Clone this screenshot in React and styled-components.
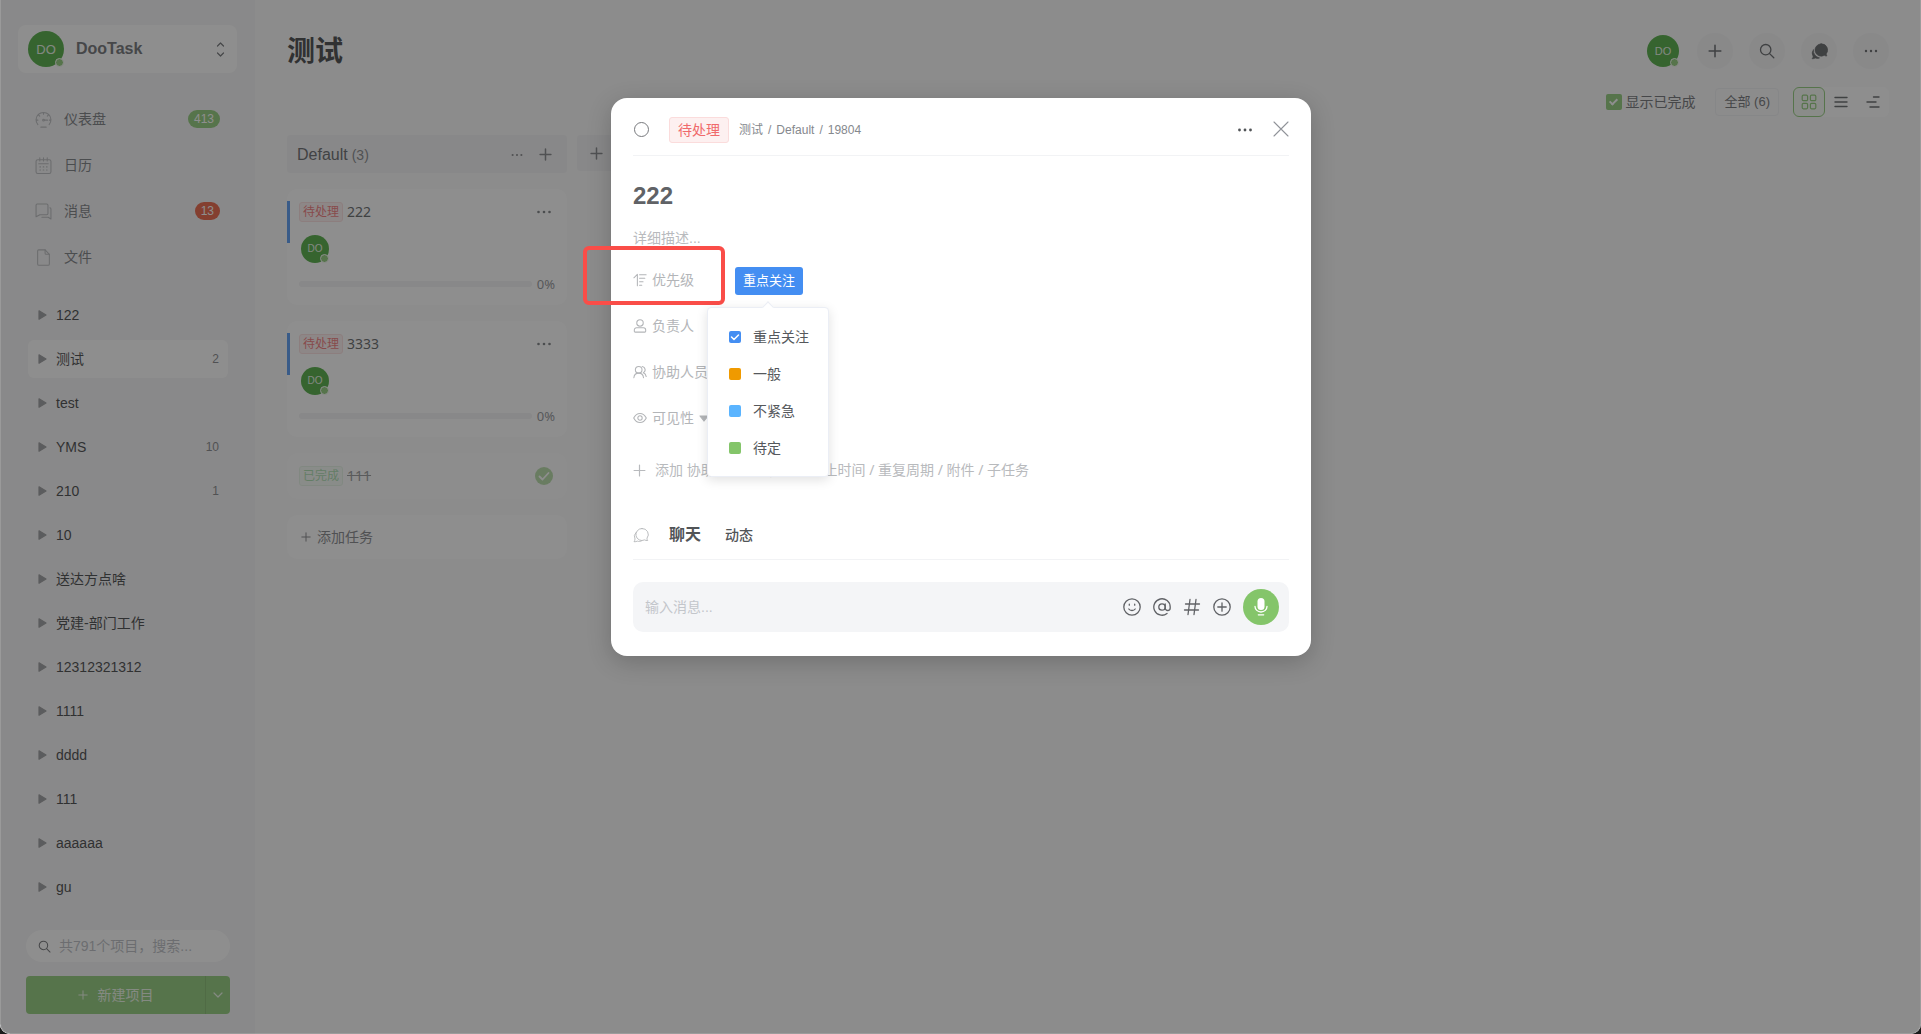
import React, { useState } from "react";
import styled, { createGlobalStyle, css } from "styled-components";

const sans = `"Liberation Sans", "Noto Sans CJK SC", sans-serif`;
const humanist = `"Noto Sans", "Noto Sans CJK SC", sans-serif`;

const Global = createGlobalStyle`
  *, *::before, *::after { box-sizing: border-box; }
  body { margin: 0; background: #1b1b1b; font-family: ${sans}; font-size: 14px; line-height: 20px; color: #303133; }
  button, input { font: inherit; color: inherit; margin: 0; padding: 0; border: 0; background: none; outline: none; }
  button { cursor: pointer; }
  h1, h2, h3, p, ul { margin: 0; padding: 0; font-size: inherit; font-weight: inherit; }
  ul { list-style: none; }
  a { color: inherit; text-decoration: none; }
`;

/* ---------- shared ---------- */

const Glyph = styled.svg.attrs((p) => ({
  width: p.$size || 16,
  height: p.$size || 16,
  viewBox: p.viewBox || "0 0 16 16",
  fill: "none",
  stroke: "currentColor",
  strokeWidth: p.$w || 1.2,
  strokeLinecap: "round",
  strokeLinejoin: "round",
  "aria-hidden": true,
}))`
  display: block;
  flex: none;
`;

const Plus = ({ size = 12, w = 1.2 }) => (
  <Glyph $size={size} viewBox="0 0 12 12" $w={w}>
    <path d="M6 1v10M1 6h10" />
  </Glyph>
);
const Dots = ({ size = 16, r = 1.2, gap = 5 }) => (
  <Glyph $size={size} $w={0}>
    <g fill="currentColor" stroke="none">
      <circle cx={8 - gap} cy="8" r={r} />
      <circle cx="8" cy="8" r={r} />
      <circle cx={8 + gap} cy="8" r={r} />
    </g>
  </Glyph>
);
const SearchIcon = ({ size }) => (
  <Glyph $size={size} $w={1.3}>
    <circle cx="6.7" cy="6.7" r="5.2" />
    <path d="M10.6 10.6l4.2 4.2" />
  </Glyph>
);

const Face = styled.span`
  position: relative;
  display: inline-flex;
  flex: none;
  align-items: center;
  justify-content: center;
  width: ${(p) => p.$size}px;
  height: ${(p) => p.$size}px;
  border-radius: 50%;
  background: #3ca32d;
  color: #e6f2e4;
  font-size: ${(p) => p.$font}px;
  font-weight: 400;
  line-height: 1;
  &::after {
    content: "";
    position: absolute;
    right: 0;
    bottom: 0;
    width: 9px;
    height: 9px;
    border: 1px solid #fff;
    border-radius: 50%;
    background: #84c56a;
  }
`;
const Avatar = ({ size, font }) => (
  <Face $size={size} $font={font}>
    DO
  </Face>
);

const tones = {
  todo: css`
    color: #f0696b;
    background: #fdf0f0;
    border-color: #fbdcdc;
  `,
  done: css`
    color: #6fc777;
    background: #f1f9f1;
    border-color: #d5eed6;
  `,
};
const Tag = styled.span`
  display: inline-flex;
  align-items: center;
  justify-content: center;
  flex: none;
  height: ${(p) => (p.$large ? 26 : 20)}px;
  padding: 0 ${(p) => (p.$large ? 8 : 3)}px;
  border: 1px solid;
  border-radius: 3px;
  font-size: ${(p) => (p.$large ? 14 : 12)}px;
  ${(p) => tones[p.$tone]}
`;

/* ---------- shell ---------- */

const Window = styled.div`
  position: relative;
  display: flex;
  height: 100vh;
  overflow: hidden;
  border-radius: 0 0 10px 10px;
  background: #fafafa;
`;
const Mask = styled.div`
  position: absolute;
  inset: 0;
  display: flex;
  align-items: flex-start;
  justify-content: center;
  padding: 98px 0 0 1px;
  background: rgba(50, 50, 50, 0.55);
  border: 1px solid rgba(255, 255, 255, 0.14);
  border-top: 0;
  border-radius: 0 0 10px 10px;
`;

/* ---------- sidebar ---------- */

const Sidebar = styled.aside`
  display: flex;
  flex-direction: column;
  flex: none;
  width: 255px;
  padding: 25px 0 20px;
  background: #f4f4f5;
`;
const Account = styled.button`
  display: flex;
  align-items: center;
  height: 48px;
  margin: 0 18px;
  padding: 0 8px 0 10px;
  gap: 12px;
  border-radius: 8px;
  background: #fff;
  color: #606266;
  font-size: 16px;
  font-weight: 700;
  text-align: left;
  span:nth-child(2) { flex: 1; }
`;
const Menu = styled.ul`
  margin-top: 23px;
`;
const MenuLink = styled.a`
  display: flex;
  align-items: center;
  height: 46px;
  padding: 0 35px;
  gap: 12px;
  color: #6c6f74;
  svg { color: #b2b4b8; }
  span { flex: 1; }
`;
const Badge = styled.b`
  min-width: 24px;
  height: 18px;
  padding: 0 6px;
  border-radius: 9px;
  background: ${(p) => p.$color};
  color: #fff;
  font-size: 12px;
  font-weight: 400;
  line-height: 18px;
  text-align: center;
`;
const Projects = styled.ul`
  flex: 1;
  min-height: 0;
  margin-top: 16px;
  padding: 0 27px 0 28px;
  overflow: hidden;
`;
const Project = styled.a`
  display: flex;
  align-items: center;
  height: 38px;
  margin-bottom: 6px;
  padding: 0 9px;
  gap: 9px;
  border-radius: 6px;
  background: ${(p) => (p.$active ? "#fff" : "transparent")};
  svg { color: #8f9194; }
  span { flex: 1; }
  small { font-size: 12px; color: #77797d; }
`;
const SideFoot = styled.div`
  display: flex;
  flex-direction: column;
  gap: 14px;
  padding: 0 25px 0 26px;
`;
const SearchBox = styled.label`
  display: flex;
  align-items: center;
  height: 32px;
  padding: 0 12px;
  gap: 8px;
  border-radius: 16px;
  background: #fff;
  color: #606266;
  input { flex: 1; min-width: 0; }
  input::placeholder { color: #b4b7bd; opacity: 1; }
`;
const SplitButton = styled.div`
  display: flex;
  height: 38px;
  border-radius: 4px;
  background: #84c56a;
  color: #e9f5e4;
  overflow: hidden;
`;
const CreateButton = styled.button`
  display: flex;
  flex: 1;
  align-items: center;
  justify-content: center;
  gap: 10px;
`;
const MoreButton = styled.button`
  display: flex;
  align-items: center;
  justify-content: center;
  width: 25px;
  border-left: 1px solid #75b15d;
`;

/* ---------- board ---------- */

const Main = styled.main`
  flex: 1;
  min-width: 0;
  padding: 33px 32px 0;
`;
const TopBar = styled.header`
  display: flex;
  align-items: center;
  justify-content: space-between;
  height: 36px;
`;
const PageTitle = styled.h1`
  padding-top: 2px;
  color: #303133;
  font-size: 28px;
  font-weight: 700;
  line-height: 36px;
`;
const Actions = styled.div`
  display: flex;
  align-items: center;
  gap: 16px;
  > span { margin-right: 2px; }
`;
const RoundButton = styled.button`
  display: flex;
  align-items: center;
  justify-content: center;
  width: 36px;
  height: 36px;
  border-radius: 50%;
  background: #f3f3f4;
  color: #515457;
`;
const Filters = styled.div`
  display: flex;
  align-items: center;
  justify-content: flex-end;
  height: 30px;
  margin-top: 18px;
`;
const CheckLabel = styled.label`
  display: flex;
  align-items: center;
  gap: 3px;
  margin-right: 20px;
  color: #606266;
  input {
    position: relative;
    appearance: none;
    width: 16px;
    height: 16px;
    border-radius: 2px;
    background: #84c56a;
  }
  input:checked::after {
    content: "";
    position: absolute;
    left: 5px;
    top: 3px;
    width: 5px;
    height: 8px;
    border: solid #fff;
    border-width: 0 2px 2px 0;
    transform: rotate(45deg);
  }
`;
const FilterButton = styled.button`
  height: 28px;
  padding: 0 8px;
  border: 1px solid #eeeff1;
  border-radius: 4px;
  margin-right: 14px;
  color: #606266;
  font-size: 13px;
`;
const ViewSwitch = styled.div`
  display: flex;
  border-radius: 6px;
  background: #fff;
`;
const ViewButton = styled.button`
  display: flex;
  align-items: center;
  justify-content: center;
  width: 32px;
  height: 30px;
  border: 1px solid ${(p) => (p.$active ? "#84c56a" : "transparent")};
  border-radius: 6px;
  background: ${(p) => (p.$active ? "#f6faf4" : "transparent")};
  color: ${(p) => (p.$active ? "#84c56a" : "#515457")};
`;
const Board = styled.div`
  display: flex;
  align-items: flex-start;
  gap: 10px;
  margin-top: 18px;
`;
const Column = styled.section`
  display: flex;
  flex-direction: column;
  flex: none;
  width: 280px;
  gap: 16px;
`;
const ColumnHead = styled.header`
  display: flex;
  align-items: center;
  height: 38px;
  padding: 1px 15px 0 10px;
  border-radius: 4px;
  background: #f2f2f3;
  color: #77797d;
  h2 { margin-right: 4px; color: #55585c; font-size: 16px; }
  span { flex: 1; font-size: 14px; }
  button + button { margin-left: 15px; }
`;
const AddColumn = styled.button`
  display: flex;
  align-items: center;
  flex: none;
  width: 280px;
  height: 36px;
  padding-left: 13px;
  border-radius: 4px;
  background: #f2f2f3;
  color: #77797d;
`;
const Card = styled.article`
  padding: 12px 12px 0 0;
  height: ${(p) => (p.$done ? 46 : 116)}px;
  border-radius: 10px;
  background: ${(p) => (p.$done ? "#fcfcfc" : "#fff")};
`;
const CardBody = styled.div`
  padding-left: ${(p) => (p.$done ? 12 : 9)}px;
  border-left: ${(p) => (p.$done ? "0" : "3px solid #448ef2")};
  height: ${(p) => (p.$done ? 24 : 42)}px;
`;
const CardTitle = styled.div`
  display: flex;
  align-items: center;
  height: 22px;
  gap: 4px;
  font-family: ${humanist};
  font-size: 14px;
  opacity: ${(p) => (p.$done ? 0.65 : 1)};
  h3 { flex: 1; color: #515457; text-decoration: ${(p) => (p.$done ? "line-through" : "none")}; }
  button { margin-right: ${(p) => (p.$done ? 2 : 3)}px; color: #6c6f74; }
`;
const Owner = styled.div`
  padding: 12px 2px 0;
`;
const Progress = styled.div`
  display: flex;
  align-items: center;
  gap: 5px;
  height: 16px;
  margin: 33px 0 0 12px;
  color: #85888d;
  font-family: ${humanist};
  font-size: 13px;
  i { flex: 1; height: 6px; border-radius: 3px; background: #f1f1f3; }
`;
const AddTask = styled.button`
  display: flex;
  align-items: center;
  height: 44px;
  padding: 0 14px;
  gap: 6px;
  border-radius: 10px;
  background: #fefefe;
  color: #77797d;
`;

/* ---------- task dialog ---------- */

const Dialog = styled.section`
  position: relative;
  width: 700px;
  max-width: calc(100% - 48px);
  padding: 0 22px 24px;
  border-radius: 16px;
  background: #fff;
  box-shadow: 0 6px 24px rgba(0, 0, 0, 0.2);
`;
const DialogHead = styled.header`
  display: flex;
  align-items: center;
  height: 58px;
  padding-top: 6px;
  border-bottom: 1px solid #f2f3f5;
`;
const StateButton = styled.button`
  width: 15px;
  height: 15px;
  margin: 0 20px 0 1px;
  border: 1px solid #77797d;
  border-radius: 50%;
`;
const Crumbs = styled.nav`
  display: flex;
  flex: 1;
  gap: 5px;
  margin-left: 10px;
  color: #85888d;
  font-size: 12px;
`;
const HeadButton = styled.button`
  margin-left: ${(p) => (p.$gap ? 20 : 0)}px;
  padding-bottom: ${(p) => (p.$gap ? 2 : 0)}px;
  color: ${(p) => (p.$gap ? "#909399" : "#515457")};
`;
const TaskTitle = styled.h2`
  margin-top: 25px;
  color: #606266;
  font-size: 24px;
  font-weight: 700;
  line-height: 30px;
`;
const Description = styled.p`
  margin-top: 17px;
  color: #b8babd;
`;
const Fields = styled.div`
  margin-top: 10px;
`;
const Field = styled.div`
  display: flex;
  align-items: center;
  height: 46px;
  color: #b3b5b8;
`;
const FieldName = styled.span`
  display: flex;
  align-items: center;
  gap: 5px;
  width: 102px;
  padding-bottom: 2px;
  white-space: nowrap;
`;
const PriorityWrap = styled.div`
  position: relative;
`;
const Priority = styled.button`
  display: block;
  height: 28px;
  padding: 0 8px;
  border-radius: 3px;
  background: #448ef2;
  color: #fff;
  font-size: 13px;
`;
const Popup = styled.div`
  position: absolute;
  z-index: 2;
  top: 40px;
  left: -28px;
  width: 122px;
  padding: 10px 0;
  border: 1px solid #ebeef5;
  border-radius: 4px;
  background: #fff;
  box-shadow: 0 3px 12px rgba(0, 0, 0, 0.12);
  &::before {
    content: "";
    position: absolute;
    top: -5px;
    left: 56px;
    width: 8px;
    height: 8px;
    border: solid #ebeef5;
    border-width: 1px 0 0 1px;
    background: #fff;
    transform: rotate(45deg);
  }
`;
const Option = styled.button`
  display: flex;
  align-items: center;
  width: 100%;
  height: 37px;
  padding-left: 21px;
  gap: 12px;
  color: #55585c;
  white-space: nowrap;
  i {
    display: flex;
    align-items: center;
    justify-content: center;
    width: 12px;
    height: 12px;
    border-radius: 2px;
    background: ${(p) => p.$color};
    color: #fff;
  }
`;
const AddField = styled.button`
  display: flex;
  align-items: center;
  height: 30px;
  gap: 9px;
  margin-top: 13px;
  color: #b8babd;
  font-family: ${humanist};
`;
const Tabs = styled.div`
  display: flex;
  align-items: center;
  height: 50px;
  margin-top: 25px;
  border-bottom: 1px solid #f2f3f5;
  svg { margin-right: 20px; color: #b3b5b8; }
`;
const Tab = styled.button`
  margin-right: 24px;
  color: #515457;
  font-size: ${(p) => (p.$active ? 16 : 14)}px;
  font-weight: ${(p) => (p.$active ? 700 : 500)};
`;
const Composer = styled.div`
  display: flex;
  align-items: center;
  height: 50px;
  margin-top: 22px;
  padding: 0 10px 0 12px;
  gap: 12px;
  border-radius: 10px;
  background: #f4f5f7;
  color: #606266;
  input { flex: 1; min-width: 0; }
  input::placeholder { color: #c3c6cb; opacity: 1; }
`;
const MicButton = styled.button`
  display: flex;
  align-items: center;
  justify-content: center;
  width: 36px;
  height: 36px;
  border-radius: 50%;
  background: #84c56a;
  color: #fff;
`;
const Marker = styled.div`
  position: absolute;
  top: 148px;
  left: -28px;
  width: 142px;
  height: 59px;
  border: 4px solid #fa4d48;
  border-radius: 6px;
  pointer-events: none;
`;

/* ---------- data ---------- */

const menu = [
  {
    name: "仪表盘",
    badge: 413,
    color: "#84c56a",
    icon: (
      <>
        <path d="M2.700 12.900A7 7 0 1 1 13.300 12.900M5.500 15.200h5M8.800 8.600h3M8 1.500v1.600M1.200 8.600h1.500M14.700 8.600h-1.200M3.300 3.700l1.100 1.100M12.700 3.700l-1.100 1.100" />
        <circle cx="8" cy="8.6" r=".8" />
      </>
    ),
  },
  {
    name: "日历",
    icon: (
      <>
        <rect x="1" y="2.5" width="14" height="13" rx="1.6" />
        <path d="M4.5.8v3M8 .8v3M11.5.8v3M3.5 6.3h9M4.6 9.3h.6M7.7 9.3h.6M10.8 9.3h.6M4.6 12.3h.6M7.7 12.3h.6M10.8 12.3h.6" />
      </>
    ),
  },
  {
    name: "消息",
    badge: 13,
    color: "#e8502f",
    icon: (
      <>
        <path d="M2 1h9a1.2 1.2 0 0 1 1.200 1.200v7.600a1.200 1.200 0 0 1-1.200 1.200H4.600L1 13V2a1 1 0 0 1 1-1z" />
        <path d="M14 4.500a1.200 1.200 0 0 1 1 1.200V15l-2.600-1.600H6.500" />
      </>
    ),
  },
  {
    name: "文件",
    icon: (
      <>
        <path d="M3.500.8h6L13.500 5v9a1.300 1.300 0 0 1-1.300 1.300H3.800A1.300 1.300 0 0 1 2.500 14V2A1.200 1.200 0 0 1 3.500.8z" />
        <path d="M9.500.8V4a1 1 0 0 0 1 1h3" />
      </>
    ),
  },
];

const projects = [
  ["122"],
  ["测试", 2, true],
  ["test"],
  ["YMS", 10],
  ["210", 1],
  ["10"],
  ["送达方点啥"],
  ["党建-部门工作"],
  ["12312321312"],
  ["1111"],
  ["dddd"],
  ["111"],
  ["aaaaaa"],
  ["gu"],
];

const priorities = [
  ["重点关注", "#448ef2"],
  ["一般", "#f09a00"],
  ["不紧急", "#5ab4ff"],
  ["待定", "#84c56a"],
];

const Task = ({ title }) => (
  <Card>
    <CardBody>
      <CardTitle>
        <Tag $tone="todo">待处理</Tag>
        <h3>{title}</h3>
        <button aria-label="更多">
          <Dots r={1.3} gap={5.500} />
        </button>
      </CardTitle>
      <Owner>
        <Avatar size={28} font={10} />
      </Owner>
    </CardBody>
    <Progress>
      <i />
      0%
    </Progress>
  </Card>
);

export default function App() {
  const [showDone, setShowDone] = useState(true);
  const [priority, setPriority] = useState(0);

  return (
    <>
      <Global />
      <Window>
        <Sidebar>
          <Account>
            <Avatar size={36} font={13} />
            <span>DooTask</span>
            <Glyph $size={18} viewBox="0 0 18 18" $w={1.2}>
              <path d="M6.500 6l3-3 3 3M6.500 13l3 3 3-3" />
            </Glyph>
          </Account>
          <Menu>
            {menu.map((m) => (
              <li key={m.name}>
                <MenuLink href="#">
                  <Glyph $size={17} $w={1}>
                    {m.icon}
                  </Glyph>
                  <span>{m.name}</span>
                  {m.badge && <Badge $color={m.color}>{m.badge}</Badge>}
                </MenuLink>
              </li>
            ))}
          </Menu>
          <Projects>
            {projects.map(([name, count, active]) => (
              <li key={name}>
                <Project href="#" $active={active}>
                  <Glyph $size={10} viewBox="0 0 10 10">
                    <path d="M2 .8L9 5 2 9.200z" fill="currentColor" />
                  </Glyph>
                  <span>{name}</span>
                  {count && <small>{count}</small>}
                </Project>
              </li>
            ))}
          </Projects>
          <SideFoot>
            <SearchBox>
              <SearchIcon size={13} />
              <input aria-label="搜索项目" placeholder="共791个项目，搜索..." />
            </SearchBox>
            <SplitButton>
              <CreateButton>
                <Plus size={10} />
                新建项目
              </CreateButton>
              <MoreButton aria-label="更多">
                <Glyph $size={10} viewBox="0 0 10 10">
                  <path d="M1 3l4 4 4-4" />
                </Glyph>
              </MoreButton>
            </SplitButton>
          </SideFoot>
        </Sidebar>

        <Main>
          <TopBar>
            <PageTitle>测试</PageTitle>
            <Actions>
              <Avatar size={32} font={11} />
              <RoundButton aria-label="添加">
                <Plus size={14} w={1.300} />
              </RoundButton>
              <RoundButton aria-label="搜索">
                <SearchIcon size={16} />
              </RoundButton>
              <RoundButton aria-label="聊天">
                <Glyph $size={17} $w={0.600}>
                  <path
                    d="M9.500.8a5.800 5.800 0 1 0 3 10.800c.7.500 1.600.7 2.500.6-.5-.6-.7-1.300-.6-2A5.800 5.800 0 0 0 9.500.8z"
                    fill="currentColor"
                  />
                  <path
                    d="M2.200 6.500A5 5 0 0 0 2 12.400c0 .9-.5 1.800-1 2.400 1.200.1 2.300-.2 3-.7 1.300.6 2.900.5 4-.1A7 7 0 0 1 2.200 6.500z"
                    fill="currentColor"
                  />
                </Glyph>
              </RoundButton>
              <RoundButton aria-label="更多">
                <Dots />
              </RoundButton>
            </Actions>
          </TopBar>
          <Filters>
            <CheckLabel>
              <input type="checkbox" checked={showDone} onChange={(e) => setShowDone(e.target.checked)} />
              显示已完成
            </CheckLabel>
            <FilterButton>全部 (6)</FilterButton>
            <ViewSwitch>
              <ViewButton $active aria-label="看板">
                <Glyph>
                  <rect x="1.200" y="1.200" width="5.400" height="5.400" rx="1.200" />
                  <rect x="9.400" y="1.200" width="5.400" height="5.400" rx="1.200" />
                  <rect x="1.200" y="9.400" width="5.400" height="5.400" rx="1.200" />
                  <rect x="9.400" y="9.400" width="5.400" height="5.400" rx="1.200" />
                </Glyph>
              </ViewButton>
              <ViewButton aria-label="列表">
                <Glyph $w={1.400}>
                  <path d="M2 3.500h12M2 8h12M2 12.500h12" />
                </Glyph>
              </ViewButton>
              <ViewButton aria-label="甘特图">
                <Glyph $w={1.400}>
                  <path d="M8.500 3h5.500M2 8h9M5 13h9" />
                </Glyph>
              </ViewButton>
            </ViewSwitch>
          </Filters>
          <Board>
            <Column>
              <ColumnHead>
                <h2>Default</h2>
                <span>(3)</span>
                <button aria-label="更多">
                  <Dots size={14} />
                </button>
                <button aria-label="添加任务">
                  <Plus size={13} w={1.400} />
                </button>
              </ColumnHead>
              <Task title="222" />
              <Task title="3333" />
              {showDone && (
                <Card $done>
                  <CardBody $done>
                    <CardTitle $done>
                      <Tag $tone="done">已完成</Tag>
                      <h3>111</h3>
                      <button aria-label="已完成">
                        <Glyph $size={18} viewBox="0 0 18 18" $w={1.800}>
                          <circle cx="9" cy="9" r="9" fill="#84c56a" stroke="none" />
                          <path d="M4.500 9.500l3 3 6-6.500" stroke="#fff" />
                        </Glyph>
                      </button>
                    </CardTitle>
                  </CardBody>
                </Card>
              )}
              <AddTask>
                <Plus size={10} />
                添加任务
              </AddTask>
            </Column>
            <AddColumn aria-label="添加列表">
              <Plus size={13} w={1.400} />
            </AddColumn>
          </Board>
        </Main>

        <Mask>
          <Dialog role="dialog" aria-label="222">
            <DialogHead>
              <StateButton aria-label="完成任务" />
              <Tag $large $tone="todo">
                待处理
              </Tag>
              <Crumbs>
                <span>测试</span>
                <span>/</span>
                <span>Default</span>
                <span>/</span>
                <span>19804</span>
              </Crumbs>
              <HeadButton aria-label="更多">
                <Dots r={1.400} gap={5.500} />
              </HeadButton>
              <HeadButton $gap aria-label="关闭">
                <Glyph $w={1.100}>
                  <path d="M1 1l14 14M15 1L1 15" />
                </Glyph>
              </HeadButton>
            </DialogHead>
            <TaskTitle>222</TaskTitle>
            <Description>详细描述...</Description>
            <Fields>
              <Field>
                <FieldName>
                  <Glyph $size={14} $w={1.200}>
                    <path d="M1 5.500L5 1.500v13M7.500 2h7.500M7.500 6h6M7.500 10h4M7.500 14h2.500" />
                  </Glyph>
                  优先级
                </FieldName>
                <PriorityWrap>
                  <Priority>{priorities[priority][0]}</Priority>
                  <Popup>
                    {priorities.map(([name, color], i) => (
                      <Option key={name} $color={color} onClick={() => setPriority(i)}>
                        <i>
                          {i === priority && (
                            <Glyph $size={10} viewBox="0 0 10 10" $w={1.500}>
                              <path d="M1.500 5l2.500 2.500 4.500-4.500" />
                            </Glyph>
                          )}
                        </i>
                        {name}
                      </Option>
                    ))}
                  </Popup>
                </PriorityWrap>
              </Field>
              <Field>
                <FieldName>
                  <Glyph $size={14} $w={1.200}>
                    <circle cx="8" cy="4.500" r="3.700" />
                    <path d="M4 10h8a2.500 2.500 0 0 1 2.500 2.500v1.500a1 1 0 0 1-1 1h-11a1 1 0 0 1-1-1v-1.500A2.500 2.500 0 0 1 4 10z" />
                  </Glyph>
                  负责人
                </FieldName>
              </Field>
              <Field>
                <FieldName>
                  <Glyph $size={14} $w={1.200}>
                    <circle cx="6.500" cy="5.500" r="3.800" />
                    <path d="M1 14.500c.3-3 2.400-5.200 5.500-5.200s5.200 2.200 5.500 5.200M10.500 1.800a3.700 3.700 0 0 1 1.300 7c1.900.7 3 2.400 3.300 4.400" />
                  </Glyph>
                  协助人员
                </FieldName>
              </Field>
              <Field>
                <FieldName>
                  <Glyph $size={14} $w={1.200}>
                    <path d="M.8 8C2.500 4.600 5 2.800 8 2.800S13.500 4.600 15.200 8c-1.700 3.400-4.200 5.200-7.200 5.200S2.500 11.400.8 8z" />
                    <circle cx="8" cy="8" r="2.500" />
                  </Glyph>
                  可见性
                  <Glyph $size={10} viewBox="0 0 10 10">
                    <path d="M1 3h8L5 8z" fill="currentColor" />
                  </Glyph>
                </FieldName>
              </Field>
            </Fields>
            <AddField>
              <Plus size={13} w={1.100} />
              <span>添加 协助人员 / 可见性 / 截止时间 / 重复周期 / 附件 / 子任务</span>
            </AddField>
            <Tabs>
              <Glyph $w={0.900}>
                <path d="M9 1.500a6 6 0 1 0 2.500 11.400c.9.500 2 .7 3.200.6-.6-.7-.8-1.500-.7-2.300A6 6 0 0 0 9 1.500z" />
                <path d="M3 5.500a5.500 5.500 0 0 0-1 6.500c0 1-.4 1.900-1 2.700 1.300.1 2.500-.1 3.300-.6 1.500.6 3 .5 4.200-.2" />
              </Glyph>
              <Tab $active>聊天</Tab>
              <Tab>动态</Tab>
            </Tabs>
            <Composer>
              <input aria-label="输入消息" placeholder="输入消息..." />
              <button aria-label="表情">
                <Glyph $size={18} viewBox="0 0 18 18" $w={1.300}>
                  <circle cx="9" cy="9" r="8.200" />
                  <path d="M6.300 6.200v1M11.700 6.200v1M5.800 11c1.400 2 5 2 6.400 0" />
                </Glyph>
              </button>
              <button aria-label="提及">
                <Glyph $size={18} viewBox="0 0 18 18" $w={1.300}>
                  <circle cx="9" cy="9" r="3.200" />
                  <path d="M12.200 6v4a2.400 2.400 0 0 0 5 0V9a8.200 8.200 0 1 0-3.200 6.500" />
                </Glyph>
              </button>
              <button aria-label="任务">
                <Glyph $size={18} viewBox="0 0 18 18" $w={1.300}>
                  <path d="M2.500 6h14M1.500 12h14M7 1.500L5 16.500M13 1.500l-2 15" />
                </Glyph>
              </button>
              <button aria-label="添加">
                <Glyph $size={18} viewBox="0 0 18 18" $w={1.300}>
                  <circle cx="9" cy="9" r="8.200" />
                  <path d="M9 4.800v8.400M4.800 9h8.400" />
                </Glyph>
              </button>
              <MicButton aria-label="语音">
                <Glyph $size={20} viewBox="0 0 20 20" $w={1.300}>
                  <rect x="6.500" y="1" width="7" height="12" rx="3.500" fill="currentColor" stroke="none" />
                  <path d="M4 9.500a6 5.500 0 0 0 12 0M7.300 17.800h5.400" />
                </Glyph>
              </MicButton>
            </Composer>
            <Marker />
          </Dialog>
        </Mask>
      </Window>
    </>
  );
}
